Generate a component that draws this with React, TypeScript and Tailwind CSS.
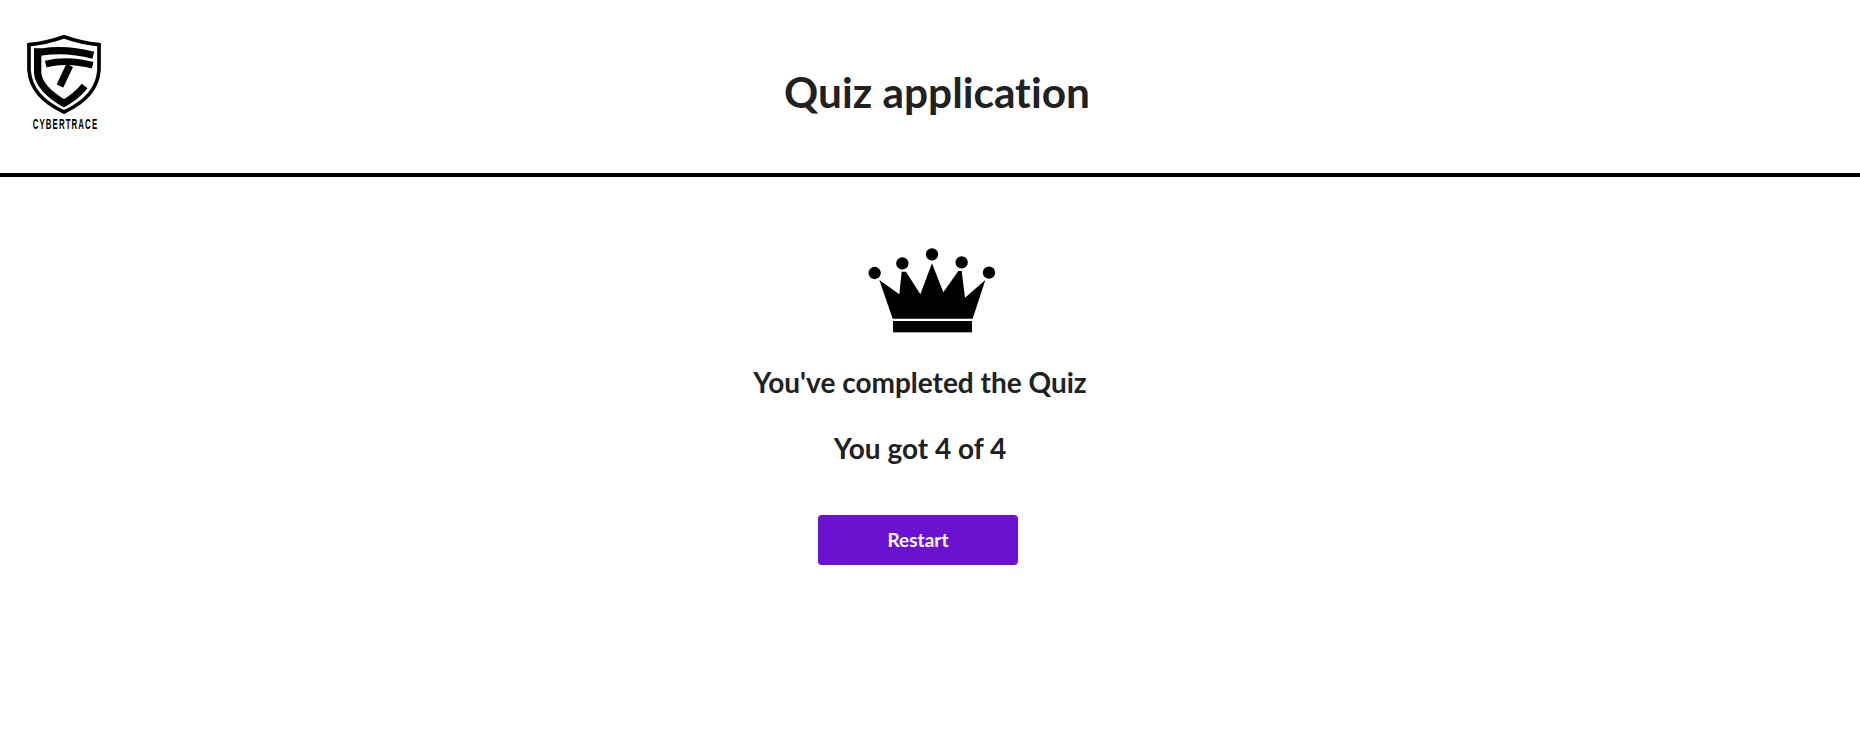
import React from "react";

function Logo() {
  return (
    <svg width="120" height="120" viewBox="0 0 360 360" className="block">
      <path d="M87 74 Q142 68 192 50 Q242 68 297 74 L297 150 Q292 230 192 276 Q92 230 87 150 Z" fill="none" stroke="#000" strokeWidth="11" strokeLinejoin="miter" />
      <path d="M280 106 Q200 84 124 96 L113 96 L113 160 Q118 206 192 250 Q230 228 254 198" fill="none" stroke="#000" strokeWidth="22" />
      <path d="M137 132 Q205 116 278 136" fill="none" stroke="#000" strokeWidth="20" />
      <path d="M209 136 L180 198" fill="none" stroke="#000" strokeWidth="22" />
      <text transform="translate(98 326) scale(0.56 1)" letterSpacing="6" fontFamily="'Liberation Sans', sans-serif" fontWeight="700" fontSize="42" fill="#000">CYBERTRACE</text>
    </svg>
  );
}

function Crown() {
  return (
    <svg width="160" height="110" viewBox="0 0 480 330" className="block">
      <circle cx="71" cy="114" r="18.5" fill="#000" />
      <circle cx="154" cy="85" r="18.5" fill="#000" />
      <circle cx="243" cy="58" r="18.5" fill="#000" />
      <circle cx="332" cy="82" r="18.5" fill="#000" />
      <circle cx="414" cy="113" r="18.5" fill="#000" />
      <path d="M85 135 L145 178 L152 110 L165 110 L208 178 L243 85 L277 172 L322 108 L332 108 L342 188 L403 135 L365 251 L125 251 Z" fill="#000" />
      <rect x="126" y="258" width="237" height="34" fill="#000" />
    </svg>
  );
}

export default function App() {
  return (
    <div className="min-h-[753px] bg-white font-['Lato',sans-serif] text-[#212121] [font-variant-ligatures:none]">
      <header className="flex h-[177px] border-b-4 border-black">
        <div className="w-[120px] pt-[20px]">
          <Logo />
        </div>
        <h1 className="flex-1 pt-[67px] text-center text-[42.4px] leading-[50px] font-bold">Quiz application</h1>
        <div className="w-[106px]" />
      </header>
      <main className="flex w-[1840px] flex-col items-center pt-[58px]">
        <div className="ml-[21px]">
          <Crown />
        </div>
        <p className="mt-[15px] text-[28px] leading-[44px] font-bold">You've completed the Quiz</p>
        <p className="mt-[22px] text-[28px] leading-[44px] font-bold">You got 4 of 4</p>
        <button className="mt-[45px] mr-[4px] h-[50px] w-[200px] rounded-[4px] bg-[#6a12cf] text-[19px] font-bold text-white">Restart</button>
      </main>
    </div>
  );
}
